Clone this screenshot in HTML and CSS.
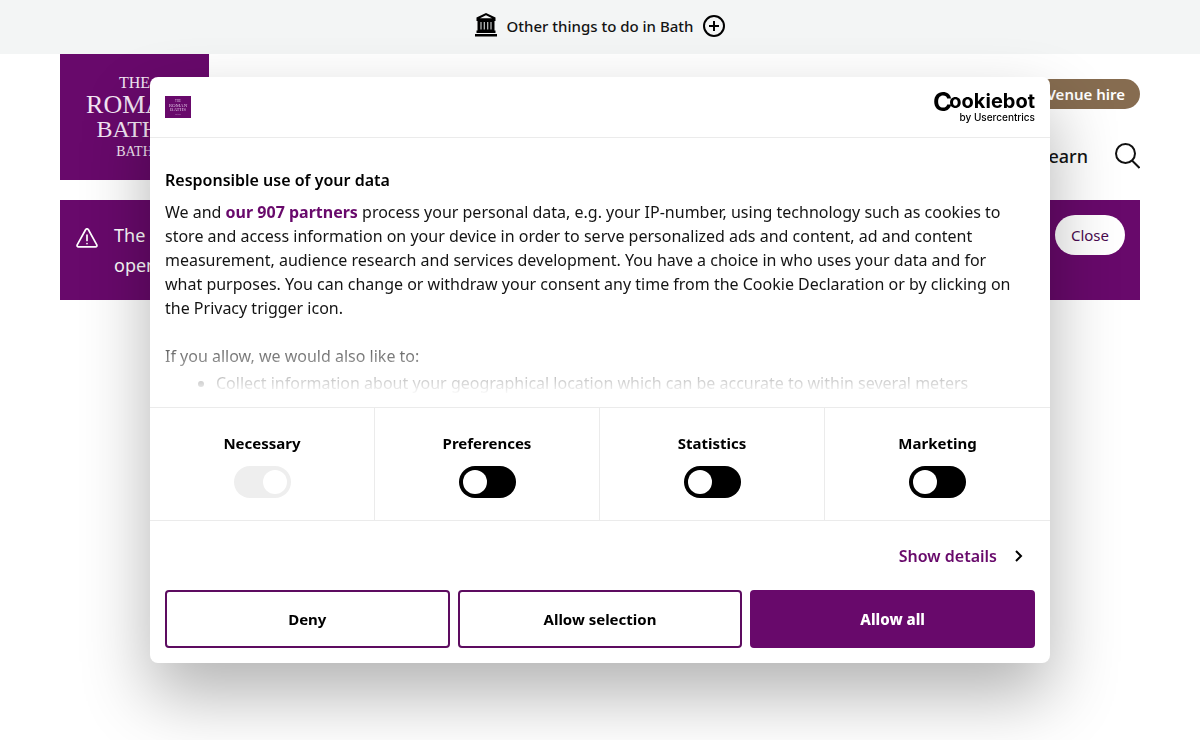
FILE: index.html
```html
<!DOCTYPE html>
<html lang="en">
<head>
    <meta charset="UTF-8">
    <meta name="viewport" content="width=device-width, initial-scale=1.0">
    <title>The Roman Baths</title>
    <link rel="stylesheet" href="styles.css">
</head>
<body>
    <div class="topbar">
        <a href="#" class="topbar-link">
            <svg width="22" height="26" viewBox="0 0 22 26" aria-hidden="true">
                <path d="M11 0 20.500 4.500V8h-19V4.500z"/>
                <path d="M11 2.200 17 5.200H5z" fill="#f3f5f5"/>
                <path d="M2.500 8h17v10h-17z"/>
                <path d="M6 9v7.500M9.300 9v7.500M12.700 9v7.500M16 9v7.500" stroke="#c4c6c6" stroke-width="1.200"/>
                <path d="M1.500 17.500h19V20h-19zM0 21h22v2.500H0z"/>
            </svg>
            <span>Other things to do in Bath</span>
            <svg width="22" height="22" viewBox="0 0 22 22" fill="none" stroke="#000" stroke-width="2" aria-hidden="true">
                <circle cx="11" cy="11" r="10"/>
                <path d="M11 6v10M6 11h10"/>
            </svg>
        </a>
    </div>

    <div class="container">
        <header class="header">
            <a href="#" class="logo">
                <span class="logo-small">THE</span>
                <span class="logo-large">ROMAN</span>
                <span class="logo-medium">BATHS</span>
                <span class="logo-town">BATH</span>
            </a>
            <div class="header-right">
                <a href="#" class="venue-button">Venue hire</a>
                <nav class="nav">
                    <a href="#">Learn</a>
                    <button class="search-button" aria-label="Search">
                        <svg width="25" height="26" viewBox="0 0 25 26" fill="none" stroke="#111" stroke-width="2">
                            <circle cx="10.500" cy="10.500" r="9.500"/>
                            <path d="m17 17.500 7.500 7.500"/>
                        </svg>
                    </button>
                </nav>
            </div>
        </header>

        <div class="alert">
            <svg class="alert-icon" width="22" height="20" viewBox="0 0 22 20" fill="none" stroke="#fff" stroke-width="1.700" stroke-linecap="round" stroke-linejoin="round" aria-hidden="true">
                <path d="M9.700 1.500 1.200 16.800Q.6 18.800 2.500 18.800h17q1.900 0 1.300-2L12.300 1.500Q11 .2 9.700 1.500z"/>
                <path d="M11 7v5.500M11 15.500v.1"/>
            </svg>
            <p class="alert-text">The Baths<br>open daily</p>
            <button class="close-button">Close</button>
        </div>
    </div>

    <div class="dialog" role="dialog" aria-labelledby="dialog-title">
        <div class="dialog-header">
            <div class="mini-logo" aria-hidden="true">
                <svg width="26" height="22" viewBox="0 0 26 22" font-family="Liberation Serif, serif" fill="#dcbfe0" text-anchor="middle">
                    <text x="13" y="6" font-size="3">THE</text>
                    <text x="13" y="11" font-size="5">ROMAN</text>
                    <text x="13" y="15" font-size="5">BATHS</text>
                    <text x="13" y="19" font-size="2">BATH</text>
                </svg>
            </div>
            <a href="#" class="cookiebot">
                <span class="cookiebot-name"><span class="cookiebot-c">C</span>ookiebot</span>
                <span class="cookiebot-by">by Usercentrics</span>
            </a>
        </div>

        <div class="dialog-body">
            <h2 id="dialog-title">Responsible use of your data</h2>
            <p>We and <a href="#">our 907 partners</a> process your personal data, e.g. your IP-number, using technology such as cookies to store and access information on your device in order to serve personalized ads and content, ad and content measurement, audience research and services development. You have a choice in who uses your data and for what purposes. You can change or withdraw your consent any time from the Cookie Declaration or by clicking on the Privacy trigger icon.</p>
            <p>If you allow, we would also like to:</p>
            <ul>
                <li>Collect information about your geographical location which can be accurate to within several meters</li>
            </ul>
        </div>

        <div class="options">
            <div class="option">
                <label for="necessary">Necessary</label>
                <input type="checkbox" class="switch" id="necessary" checked disabled>
            </div>
            <div class="option">
                <label for="preferences">Preferences</label>
                <input type="checkbox" class="switch" id="preferences">
            </div>
            <div class="option">
                <label for="statistics">Statistics</label>
                <input type="checkbox" class="switch" id="statistics">
            </div>
            <div class="option">
                <label for="marketing">Marketing</label>
                <input type="checkbox" class="switch" id="marketing">
            </div>
        </div>

        <div class="dialog-footer">
            <a href="#" class="details-link">
                Show details
                <svg width="8" height="12" viewBox="0 0 8 12" fill="none" stroke="#000" stroke-width="2" aria-hidden="true">
                    <path d="m1 1 5 5-5 5"/>
                </svg>
            </a>
            <div class="buttons">
                <button class="button">Deny</button>
                <button class="button">Allow selection</button>
                <button class="button button-primary">Allow all</button>
            </div>
        </div>
    </div>
</body>
</html>
```
FILE: styles.css
```css
* {
    box-sizing: border-box;
}

body {
    margin: 0;
    font-family: "Noto Sans", "Open Sans", sans-serif;
    font-size: 16px;
    line-height: 24px;
    background-color: white;
    color: #141414;
}

a {
    color: inherit;
    text-decoration: none;
}

button {
    font-family: inherit;
    cursor: pointer;
}

.topbar {
    display: flex;
    justify-content: center;
    height: 54px;
    padding-bottom: 2px;
    background-color: #f3f5f5;
}

.topbar-link {
    display: flex;
    align-items: center;
    gap: 10px;
    font-size: 15px;
    font-weight: 500;
}

.container {
    max-width: 1120px;
    margin: 0 auto;
    padding: 0 20px;
}

.header {
    display: flex;
    justify-content: space-between;
    margin-bottom: 20px;
}

.logo {
    display: flex;
    flex-direction: column;
    align-items: center;
    width: 149px;
    height: 126px;
    padding-top: 20px;
    font-family: "Liberation Serif", serif;
    background-color: #68096b;
    color: #f3e6f4;
}

.logo-small {
    font-size: 16px;
    line-height: 18px;
}

.logo-large {
    font-size: 26px;
    line-height: 26px;
}

.logo-medium {
    font-size: 24px;
    line-height: 22px;
}

.logo-town {
    font-size: 14px;
    line-height: 24px;
}

.header-right {
    display: flex;
    flex-direction: column;
    align-items: flex-end;
    gap: 34px;
    padding-top: 25px;
}

.venue-button {
    padding: 0 15px;
    font-size: 15px;
    font-weight: 600;
    line-height: 30px;
    border-radius: 15px;
    background-color: #866c50;
    color: white;
}

.nav {
    display: flex;
    align-items: center;
    gap: 27px;
    font-size: 18px;
    font-weight: 500;
}

.search-button {
    display: flex;
    padding: 0;
    border: none;
    background: none;
}

.alert {
    display: flex;
    align-items: flex-start;
    min-height: 100px;
    padding: 15px 15px 15px 16px;
    background-color: #68096b;
    color: white;
}

.alert-icon {
    margin: 13px 16px 0 0;
}

.alert-text {
    flex: 1;
    margin: 5px 0 0;
    font-size: 18px;
    line-height: 30px;
}

.close-button {
    height: 40px;
    padding: 0 16px;
    font-size: 15px;
    border: none;
    border-radius: 20px;
    background-color: white;
    color: #4a0a50;
}

.dialog {
    position: fixed;
    top: 50%;
    left: 50%;
    transform: translate(-50%, -50%);
    width: 75%;
    min-width: 600px;
    border-radius: 8px;
    background-color: white;
    box-shadow: 0 32px 68px rgba(0, 0, 0, 0.3);
    overflow: hidden;
    color: #141414;
}

.dialog-header {
    display: flex;
    justify-content: space-between;
    align-items: center;
    height: 61px;
    padding: 0 15px;
    border-bottom: 1px solid #ebebeb;
}

.mini-logo {
    display: flex;
    background-color: #68096b;
}

.cookiebot {
    display: flex;
    flex-direction: column;
    align-items: flex-end;
    font-family: Inter, sans-serif;
    color: black;
}

.cookiebot-name {
    display: flex;
    font-size: 20px;
    font-weight: 700;
    line-height: 18px;
}

.cookiebot-c {
    margin-right: -3px;
    font-size: 26px;
    line-height: 20px;
}

.cookiebot-by {
    font-size: 10px;
    font-weight: 500;
    line-height: 10px;
}

.dialog-body {
    position: relative;
    max-height: 269px;
    padding: 30px 25px 0 15px;
    overflow: hidden;
}

/* fades the text out above the options */
.dialog-body::after {
    content: "";
    position: absolute;
    right: 0;
    bottom: 0;
    left: 0;
    height: 80px;
    background: linear-gradient(rgba(255, 255, 255, 0), white 85%);
}

.dialog-body h2 {
    margin: 0 0 8px;
    font-size: 16px;
    font-weight: 600;
    line-height: 24px;
    color: black;
}

.dialog-body p {
    margin: 0 0 24px;
}

.dialog-body p a {
    font-weight: 700;
    color: #68096b;
}

.dialog-body ul {
    margin: -21px 0 24px;
    padding-left: 51px;
}

.options {
    display: grid;
    grid-template-columns: repeat(4, 1fr);
    border-top: 1px solid #ebebeb;
    border-bottom: 1px solid #ebebeb;
}

.option {
    display: flex;
    flex-direction: column;
    align-items: center;
    gap: 11px;
    padding: 23px 0 22px;
    border-right: 1px solid #ebebeb;
    font-size: 15px;
    font-weight: 700;
    color: black;
}

.option:last-child {
    border-right: none;
}

.switch {
    appearance: none;
    width: 57px;
    height: 32px;
    margin: 0;
    padding: 4px;
    border-radius: 16px;
    background-color: black;
    cursor: pointer;
}

.switch::before {
    content: "";
    display: block;
    width: 24px;
    height: 24px;
    border-radius: 50%;
    background-color: white;
}

.switch:checked::before {
    margin-left: auto;
}

.switch:disabled {
    background-color: #eee;
    cursor: default;
}

.dialog-footer {
    display: flex;
    flex-direction: column;
    padding: 23px 15px 15px;
}

.details-link {
    display: flex;
    align-items: center;
    align-self: flex-end;
    gap: 18px;
    margin: 0 12px 22px 0;
    font-size: 16px;
    font-weight: 600;
    color: #68096b;
}

.buttons {
    display: grid;
    grid-template-columns: repeat(3, 1fr);
    gap: 8px;
}

.button {
    height: 58px;
    border: 2px solid #5d0c60;
    border-radius: 4px;
    font-size: 15px;
    font-weight: 700;
    background-color: white;
    color: black;
}

.button-primary {
    border-color: #68096b;
    font-weight: 800;
    background-color: #68096b;
    color: white;
}
```
